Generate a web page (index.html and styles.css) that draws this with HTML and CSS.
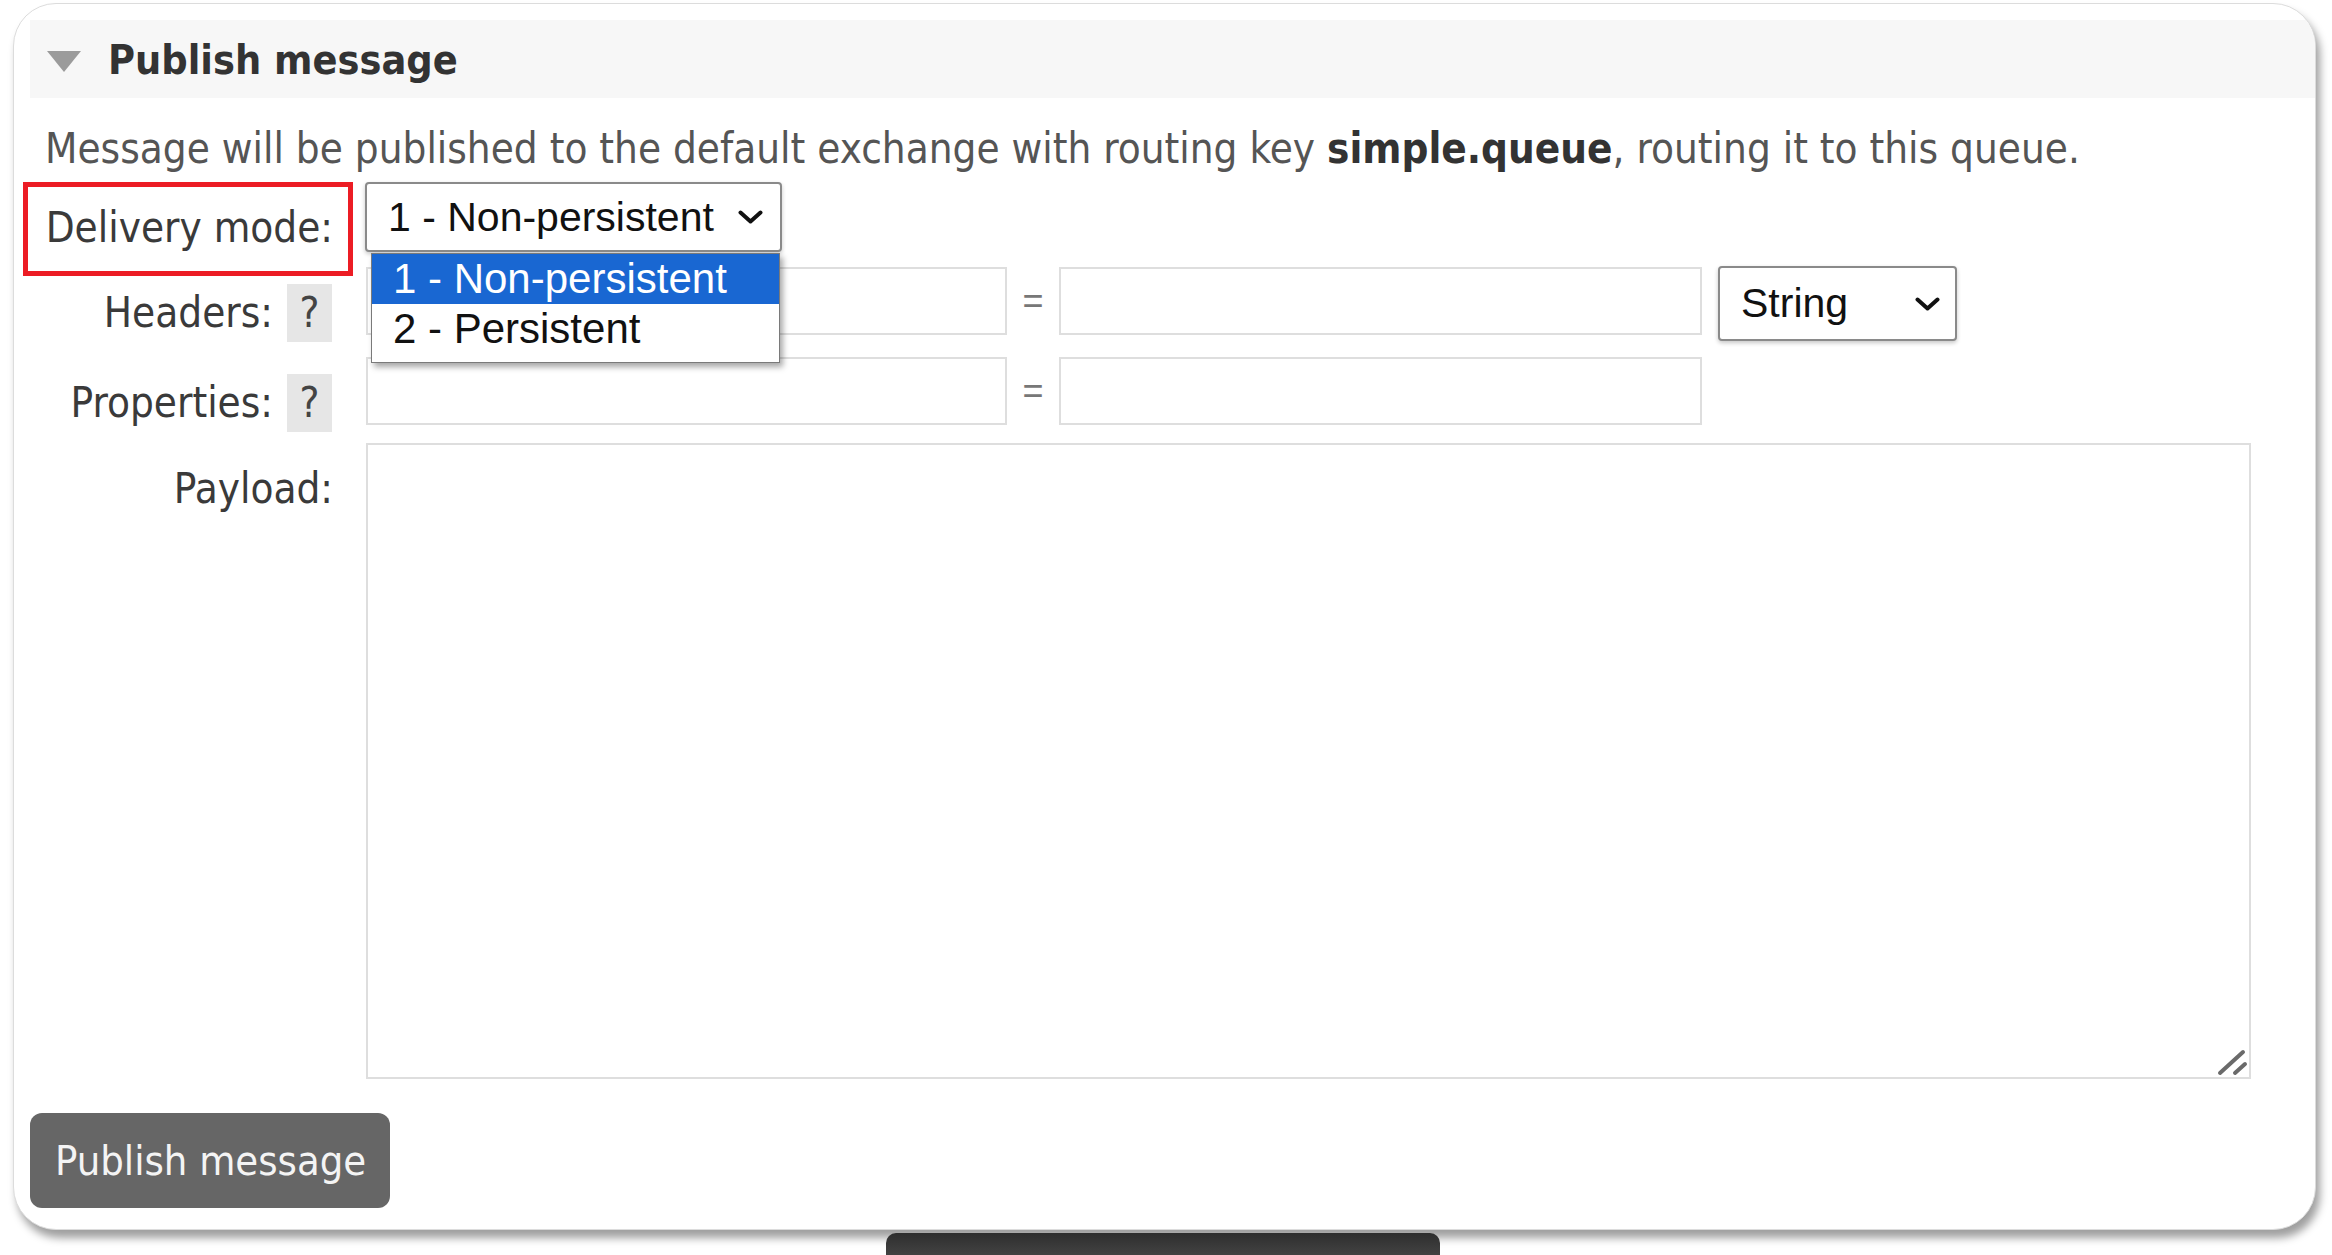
FILE: index.html
```html
<!DOCTYPE html>
<html lang="en">
<head>
<meta charset="utf-8">
<title>Publish message</title>
<link rel="stylesheet" href="styles.css">
</head>
<body>
<div class="card">
  <div class="hdr">
    <span class="tri"></span>
    <h2 class="title">Publish message</h2>
  </div>
  <p class="desc">Message will be published to the default exchange with routing key <b>simple.queue</b>, routing it to this queue.</p>
  <div class="form">
    <div class="lbl mark"><span class="lt">Delivery mode:</span></div>
    <div class="ctl">
      <div class="sel sel-mode">
        <span class="sel-text">1 - Non-persistent</span>
        <svg class="chev" viewBox="0 0 25 14"><polyline points="2.5,2.5 12.5,11.5 22.5,2.5" fill="none" stroke="#111" stroke-width="4" stroke-linecap="round" stroke-linejoin="round"/></svg>
        <div class="menu">
          <div class="opt on">1 - Non-persistent</div>
          <div class="opt">2 - Persistent</div>
        </div>
      </div>
    </div>

    <div class="lbl"><span class="lt">Headers:</span><span class="help">?</span></div>
    <div class="ctl pair">
      <input class="inp key" type="text">
      <span class="eq">=</span>
      <input class="inp val" type="text">
      <div class="sel sel-type">
        <span class="sel-text">String</span>
        <svg class="chev" viewBox="0 0 25 14"><polyline points="2.5,2.5 12.5,11.5 22.5,2.5" fill="none" stroke="#111" stroke-width="4" stroke-linecap="round" stroke-linejoin="round"/></svg>
      </div>
    </div>

    <div class="lbl"><span class="lt">Properties:</span><span class="help">?</span></div>
    <div class="ctl pair">
      <input class="inp key" type="text">
      <span class="eq">=</span>
      <input class="inp val" type="text">
    </div>

    <div class="lbl plain"><span class="lt">Payload:</span></div>
    <div class="ctl">
      <div class="area-wrap">
        <textarea class="area"></textarea>
        <svg class="grip" viewBox="0 0 40 40"><line x1="9" y1="34" x2="32" y2="13" stroke="#6a6a6a" stroke-width="4" stroke-linecap="round"/><line x1="24" y1="34" x2="34" y2="25" stroke="#6a6a6a" stroke-width="4" stroke-linecap="round"/></svg>
      </div>
    </div>
  </div>
  <button class="btn" type="button">Publish message</button>
</div>
<div class="dock"></div>
</body>
</html>
```
FILE: styles.css
```css
* { box-sizing: border-box; }

html, body {
  margin: 0;
  padding: 0;
  background: #fff;
  height: 100%;
  overflow: hidden;
}

body {
  font-family: "DejaVu Sans Condensed", "DejaVu Sans", sans-serif;
  font-stretch: condensed;
  color: #3a3a3a;
}

.card {
  margin: 3px 0 0 13px;
  width: 2303px;
  height: 1227px;
  border: 1px solid #dcdcdc;
  border-radius: 43px;
  background: #fff;
  box-shadow: 4px 8px 8px rgba(0, 0, 0, 0.38);
  padding: 16px 0 0 16px;
  overflow: hidden;
}

.hdr {
  display: flex;
  align-items: center;
  height: 78px;
  background: #f7f7f7;
  padding-left: 17px;
}

.tri {
  width: 0;
  height: 0;
  border-left: 17px solid transparent;
  border-right: 17px solid transparent;
  border-top: 21px solid #9b9b9b;
  margin-top: 4px;
  margin-right: 27px;
}

.title {
  margin: 2px 0 0;
  font-size: 41px;
  font-weight: bold;
  line-height: 48px;
  color: #333;
}

.desc {
  margin: 27px 0 0 15px;
  font-size: 41.8px;
  line-height: 48px;
  color: #555;
  white-space: nowrap;
}

.desc b { color: #333; }

.form {
  display: grid;
  grid-template-columns: 302px 1885px;
  grid-template-rows: 85px 90px 86px 636px;
  column-gap: 34px;
  margin-top: 9px;
}

.lbl {
  position: relative;
  display: flex;
  justify-content: flex-end;
  align-items: flex-start;
  padding-top: 17px;
  font-size: 41.8px;
  color: #3a3a3a;
  white-space: nowrap;
}

.lt {
  line-height: 48px;
  margin-top: 5px;
}

.mark .lt, .plain .lt { margin-right: -1px; }

.mark::after {
  content: "";
  position: absolute;
  left: -7px;
  right: -21px;
  top: 0;
  height: 84px;
  border: 5px solid #ec1c24;
}

.help {
  margin-left: 14px;
  width: 45px;
  height: 58px;
  line-height: 58px;
  background: #e6e6e6;
  text-align: center;
  color: #444;
}

.ctl { position: relative; }

.sel {
  position: relative;
  display: flex;
  align-items: center;
  height: 70px;
  border: 2px solid #8a8a8a;
  border-radius: 4px;
  background: #fff;
  font-family: "Liberation Sans", Arial, sans-serif;
  font-stretch: normal;
  font-size: 41px;
  color: #111;
  padding-left: 21px;
  box-shadow: 0 2px 4px rgba(0, 0, 0, 0.22);
  white-space: nowrap;
}

.chev {
  width: 25px;
  height: 14px;
  margin-left: auto;
  margin-right: 17px;
}

.sel-mode {
  width: 417px;
  margin-left: -1px;
}

.menu {
  position: absolute;
  left: 4px;
  top: 69px;
  width: 409px;
  border: 1px solid #7a7a7a;
  background: #fff;
  padding-bottom: 8px;
  box-shadow: 3px 4px 6px rgba(0, 0, 0, 0.35);
  font-size: 42px;
  z-index: 5;
}

.opt {
  height: 50px;
  line-height: 50px;
  padding-left: 21px;
  color: #111;
}

.opt.on {
  background: #1967d2;
  color: #fff;
}

.pair {
  display: flex;
  align-items: flex-start;
}

.inp {
  height: 68px;
  border: 2px solid #dedede;
  background: #fff;
  margin: 0;
  padding: 0;
  outline: none;
}

.key { width: 641px; }
.val { width: 643px; }

.eq {
  width: 52px;
  text-align: center;
  font-family: "Liberation Sans", Arial, sans-serif;
  font-stretch: normal;
  font-size: 36px;
  line-height: 68px;
  color: #777;
}

.sel-type {
  width: 239px;
  height: 75px;
  margin-left: 16px;
  margin-top: -1px;
}

.sel-type .chev { margin-right: 15px; }

.area-wrap {
  position: relative;
  width: 1885px;
  height: 636px;
}

.area {
  display: block;
  width: 100%;
  height: 100%;
  border: 2px solid #dedede;
  resize: none;
  outline: none;
  margin: 0;
}

.grip {
  position: absolute;
  right: 0;
  bottom: 0;
  width: 40px;
  height: 40px;
}

.btn {
  display: block;
  margin-top: 34px;
  width: 360px;
  height: 95px;
  border: none;
  border-radius: 12px;
  background: #666;
  color: #f4f4f4;
  font: inherit;
  font-size: 41.3px;
  text-align: left;
  padding: 0 0 0 25px;
}

.dock {
  margin: 3px 0 0 886px;
  width: 554px;
  height: 30px;
  border-radius: 10px 10px 0 0;
  background: linear-gradient(#2e2e2e, #4a4a4a);
}
```
